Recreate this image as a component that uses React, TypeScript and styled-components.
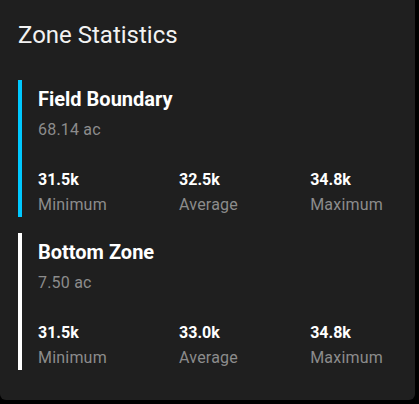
import styled, { createGlobalStyle } from "styled-components";

const GlobalStyle = createGlobalStyle`
  html, body {
    margin: 0;
    padding: 0;
    background: #000000;
  }
  body {
    font-family: Roboto, "Liberation Sans", sans-serif;
  }
`;

const Card = styled.div`
  width: 415px;
  height: 400px;
  box-sizing: border-box;
  padding: 19px 18px 0 18px;
  background-color: #1f1f1f;
  border-radius: 0 0 6px 6px;
  color: #ffffff;
`;

const Title = styled.h2`
  margin: 0 0 29px 0;
  font-size: 24px;
  line-height: 32px;
  font-weight: 400;
  color: #f2f2f2;
`;

const ZoneList = styled.div`
  display: flex;
  flex-direction: column;
  gap: 16px;
`;

const Zone = styled.div<{ $accent: string }>`
  border-left: 4px solid ${(p) => p.$accent};
  padding: 5px 14px 0 16px;
`;

const ZoneName = styled.div`
  font-size: 20px;
  line-height: 28px;
  font-weight: 700;
  color: #ffffff;
`;

const ZoneArea = styled.div`
  margin-top: 5px;
  font-size: 16px;
  line-height: 24px;
  letter-spacing: 0.2px;
  color: #8c8c8c;
`;

const StatsRow = styled.div`
  display: flex;
  justify-content: space-between;
  margin-top: 26px;
`;

const Stat = styled.div`
  display: flex;
  flex-direction: column;
`;

const StatValue = styled.span`
  font-size: 16px;
  line-height: 24px;
  font-weight: 700;
  color: #ffffff;
`;

const StatLabel = styled.span`
  padding-top: 1px;
  font-size: 16px;
  line-height: 24px;
  letter-spacing: 0.2px;
  color: #8c8c8c;
`;

interface ZoneData {
  name: string;
  area: string;
  accent: string;
  min: string;
  avg: string;
  max: string;
}

const zones: ZoneData[] = [
  {
    name: "Field Boundary",
    area: "68.14 ac",
    accent: "#00c8ff",
    min: "31.5k",
    avg: "32.5k",
    max: "34.8k",
  },
  {
    name: "Bottom Zone",
    area: "7.50 ac",
    accent: "#ffffff",
    min: "31.5k",
    avg: "33.0k",
    max: "34.8k",
  },
];

const App = () => {
  return (
    <>
      <GlobalStyle />
      <Card>
        <Title>Zone Statistics</Title>
        <ZoneList>
          {zones.map((zone) => (
            <Zone key={zone.name} $accent={zone.accent}>
              <ZoneName>{zone.name}</ZoneName>
              <ZoneArea>{zone.area}</ZoneArea>
              <StatsRow>
                <Stat>
                  <StatValue>{zone.min}</StatValue>
                  <StatLabel>Minimum</StatLabel>
                </Stat>
                <Stat>
                  <StatValue>{zone.avg}</StatValue>
                  <StatLabel>Average</StatLabel>
                </Stat>
                <Stat>
                  <StatValue>{zone.max}</StatValue>
                  <StatLabel>Maximum</StatLabel>
                </Stat>
              </StatsRow>
            </Zone>
          ))}
        </ZoneList>
      </Card>
    </>
  );
};

export default App;
